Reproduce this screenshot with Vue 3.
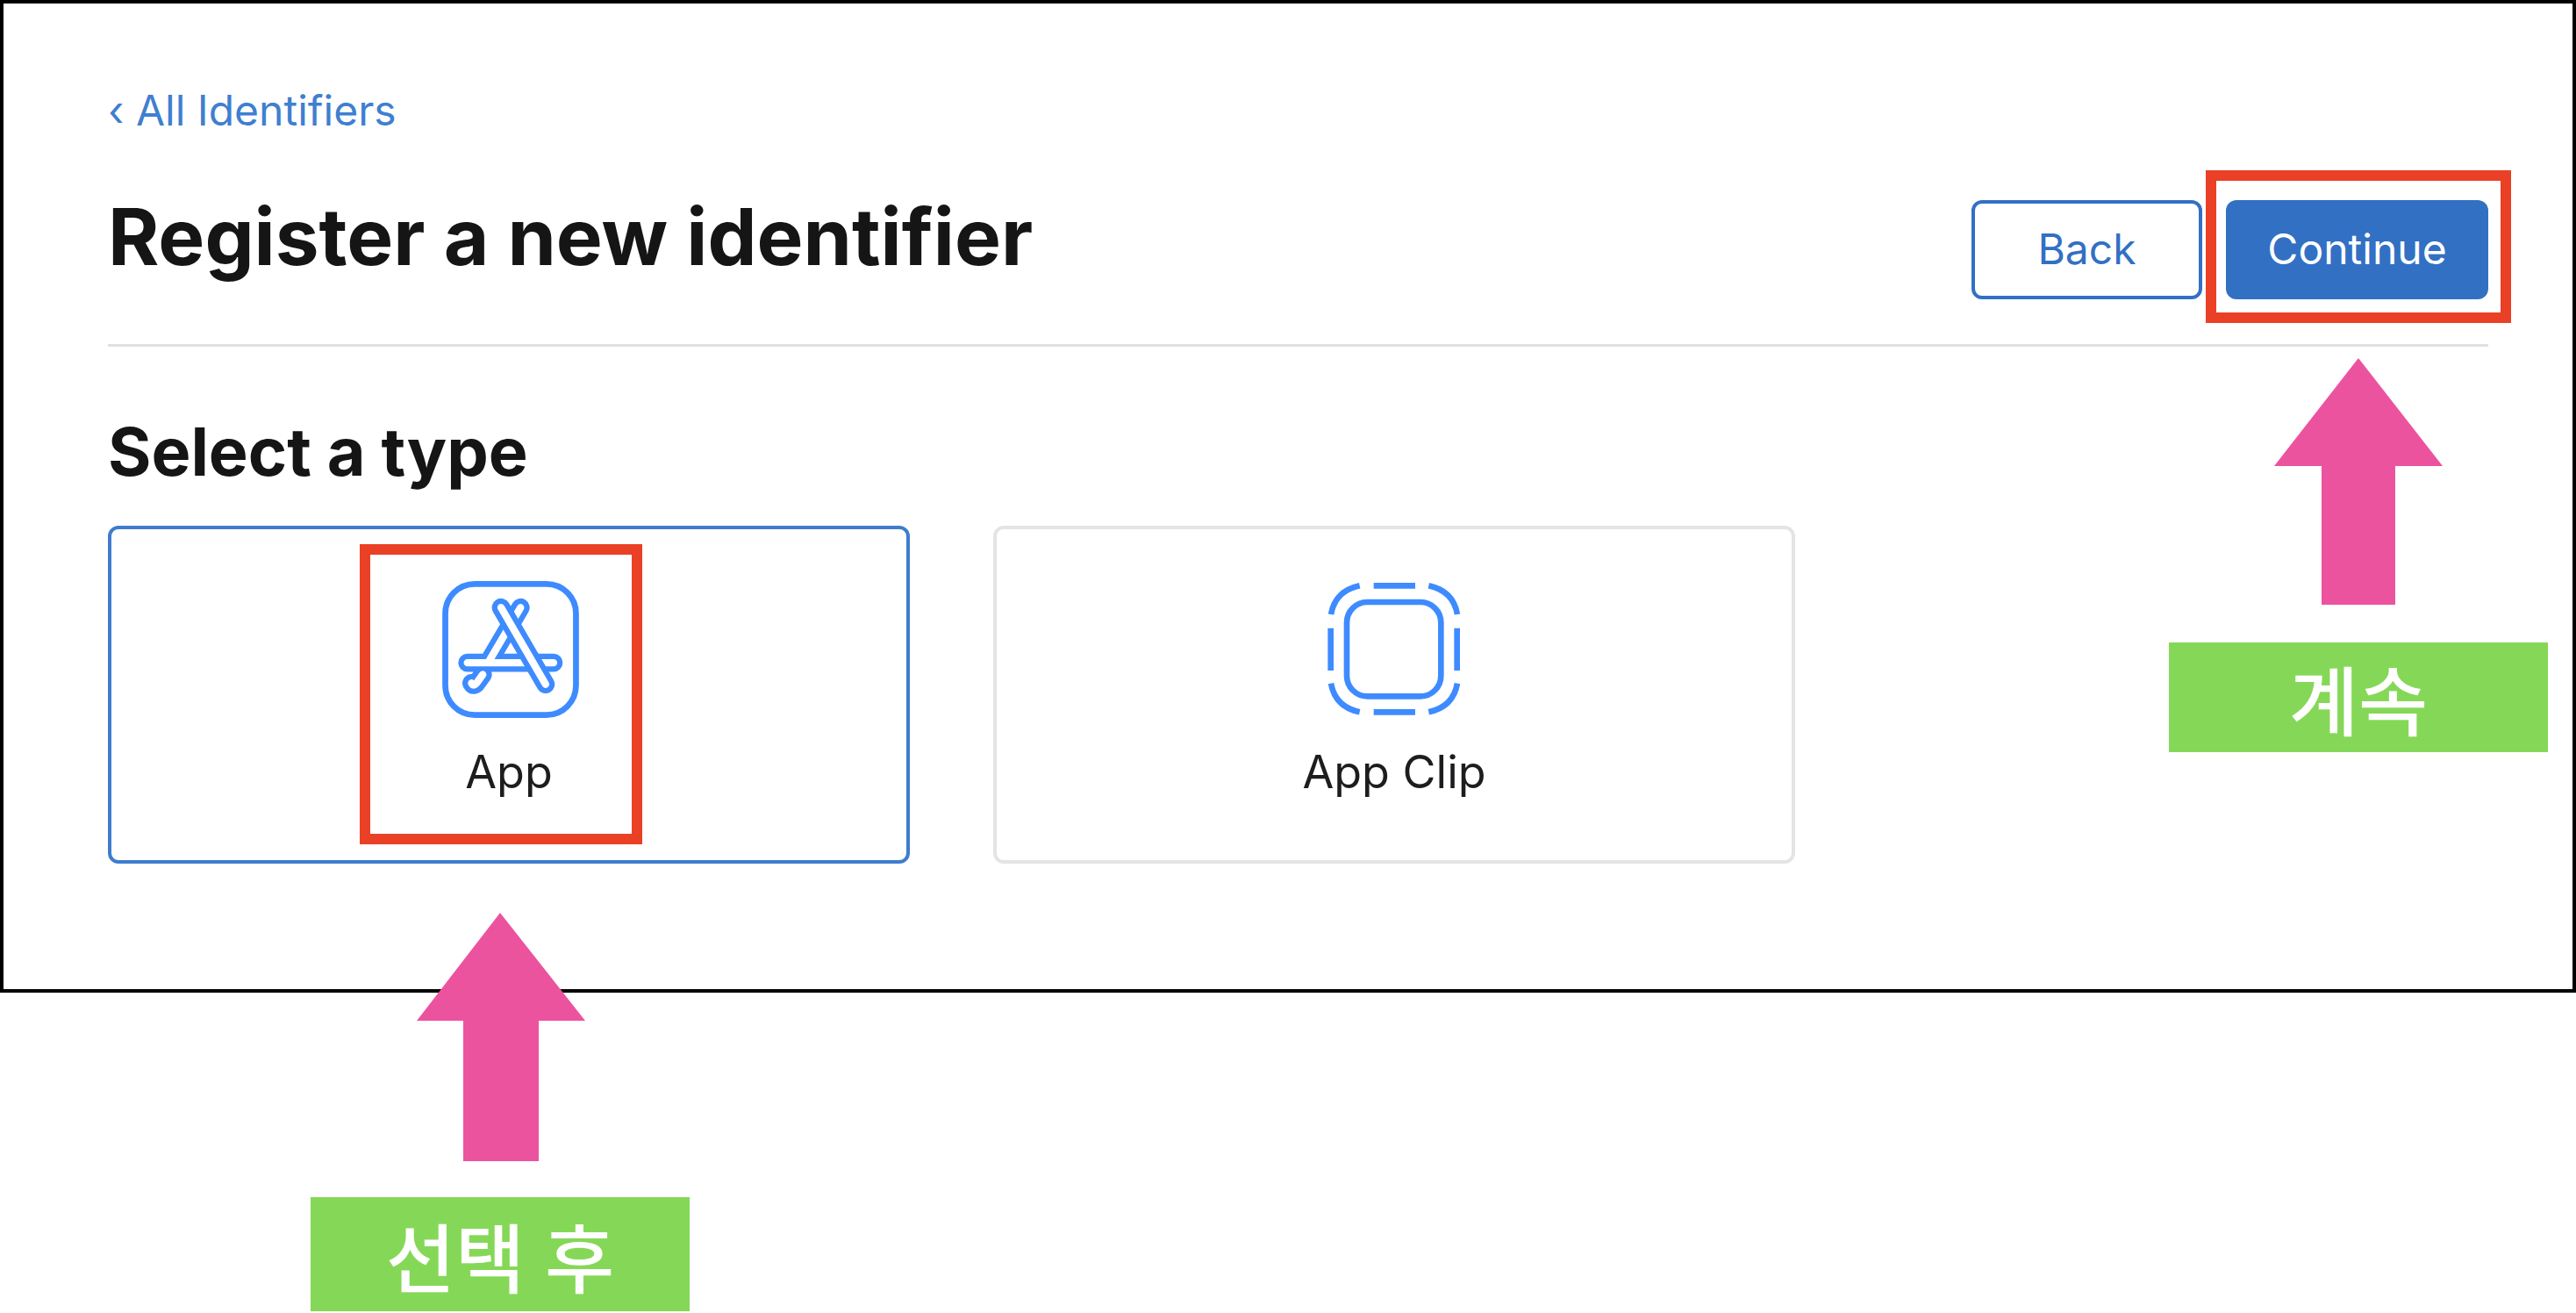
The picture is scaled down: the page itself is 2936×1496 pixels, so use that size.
<template>
  <div class="page">
    <div class="frame">
      <a class="back-link">‹ All Identifiers</a>
      <div class="header">
        <h1>Register a new identifier</h1>
        <div class="actions">
          <button class="btn btn-back">Back</button>
          <button class="btn btn-continue">Continue</button>
        </div>
      </div>
      <h2>Select a type</h2>
      <div class="cards">
        <div class="card selected">
          <svg class="type-icon" viewBox="375 188 463 464">
            <rect class="ln" x="385" y="198" width="443" height="444" rx="100" />
            <g class="glyph">
              <path class="out" d="M460 465H752M640 278L530 465M512 505L494 530Q482 548 474 534" />
              <path class="in" d="M460 465H752M640 278L530 465" />
              <path class="in hook" d="M512 505L494 530Q482 548 474 534" />
              <path class="out" d="M574 278L725 538" />
              <path class="in" d="M574 278L725 538" />
            </g>
          </svg>
          <span class="card-label">App</span>
        </div>
        <div class="card">
          <svg class="type-icon" viewBox="337 94 462 462">
            <rect class="ln" x="406" y="166" width="322" height="322" rx="70" />
            <path class="ln" d="M498 110H640M498 542H640M351 255V400M783 255V400" />
            <path class="ln" d="M352 208Q366 128 450 110M686 110Q770 128 784 208M352 444Q366 524 450 542M686 542Q770 524 784 444" />
          </svg>
          <span class="card-label">App Clip</span>
        </div>
      </div>
    </div>

    <div class="mark mark-app"></div>
    <div class="mark mark-continue"></div>

    <svg v-for="a in arrows" :key="a.id" class="arrow" :style="a.style" :viewBox="a.viewBox">
      <polygon :points="a.points" />
    </svg>

    <div class="tag tag-select">선택 후</div>
    <div class="tag tag-continue">계속</div>
  </div>
</template>

<script setup>
const arrows = [
  {
    id: 'select',
    style: { left: '475px', top: '1040px', width: '192px', height: '283px' },
    viewBox: '0 0 192 283',
    points: '95,0 192,123 139,123 139,283 53,283 53,123 0,123'
  },
  {
    id: 'continue',
    style: { left: '2592px', top: '408px', width: '192px', height: '281px' },
    viewBox: '0 0 192 281',
    points: '96,0 192,123 138,123 138,281 54,281 54,123 0,123'
  }
]
</script>

<style>
body {
  margin: 0;
  background: #fff;
}
</style>

<style scoped>
.page {
  position: relative;
  width: 2936px;
  height: 1496px;
  overflow: hidden;
  background: #fff;
  font-family: Inter, "Noto Sans CJK KR", sans-serif;
}
.frame {
  box-sizing: border-box;
  height: 1131px;
  padding: 92px 96px 0 119px;
  border: 4px solid #000;
}
.back-link {
  display: block;
  height: 132px;
  font-size: 48px;
  line-height: 60px;
  color: #3f7fd0;
}
.header {
  display: flex;
  justify-content: space-between;
  align-items: flex-start;
  padding-bottom: 51px;
  border-bottom: 3px solid #e0e0e0;
}
h1 {
  margin: 0;
  font-size: 89px;
  line-height: 84px;
  font-weight: 700;
  color: #151515;
}
.actions {
  display: flex;
  gap: 27px;
}
.btn {
  box-sizing: border-box;
  height: 113px;
  border-radius: 12px;
  font-family: inherit;
  font-size: 48px;
  padding: 0 0 3px;
}
.btn-back {
  width: 263px;
  background: #fff;
  border: 4px solid #3270c4;
  color: #3270c4;
}
.btn-continue {
  width: 299px;
  background: #3270c4;
  border: 0;
  color: #fff;
}
h2 {
  margin: 78px 0 0;
  font-size: 75.5px;
  line-height: 84px;
  font-weight: 700;
  color: #151515;
}
.cards {
  display: flex;
  gap: 95px;
  margin-top: 42px;
}
.card {
  box-sizing: border-box;
  width: 914px;
  height: 385px;
  display: flex;
  flex-direction: column;
  align-items: center;
  padding-top: 59px;
  border: 4px solid #e4e4e4;
  border-radius: 12px;
}
.card.selected {
  border-color: #3f7cce;
}
.type-icon {
  width: 154px;
  height: 154px;
}
.selected .type-icon {
  width: 156px;
  height: 156px;
  margin: 0 0 -2px 4px;
}
.card-label {
  margin-top: 34px;
  font-size: 52px;
  line-height: 60px;
  color: #1d1d1f;
}
.ln {
  fill: none;
  stroke: #3e8bff;
  stroke-width: 20;
}
.glyph path {
  fill: none;
  stroke-linecap: round;
}
.glyph .out {
  stroke: #3e8bff;
  stroke-width: 62;
}
.glyph .in {
  stroke: #fff;
  stroke-width: 25;
}
.mark {
  position: absolute;
  box-sizing: border-box;
  border: 12px solid #ea4026;
}
.mark-app {
  left: 410px;
  top: 620px;
  width: 322px;
  height: 342px;
}
.mark-continue {
  left: 2514px;
  top: 194px;
  width: 348px;
  height: 174px;
}
.arrow {
  position: absolute;
  fill: #ec539f;
}
.tag {
  position: absolute;
  background: #85d857;
  color: #fff;
  display: flex;
  align-items: center;
  justify-content: center;
  font-weight: 500;
  font-size: 86px;
}
.tag-select {
  left: 354px;
  top: 1364px;
  width: 432px;
  height: 130px;
}
.tag-continue {
  left: 2472px;
  top: 732px;
  width: 432px;
  height: 125px;
}
</style>
